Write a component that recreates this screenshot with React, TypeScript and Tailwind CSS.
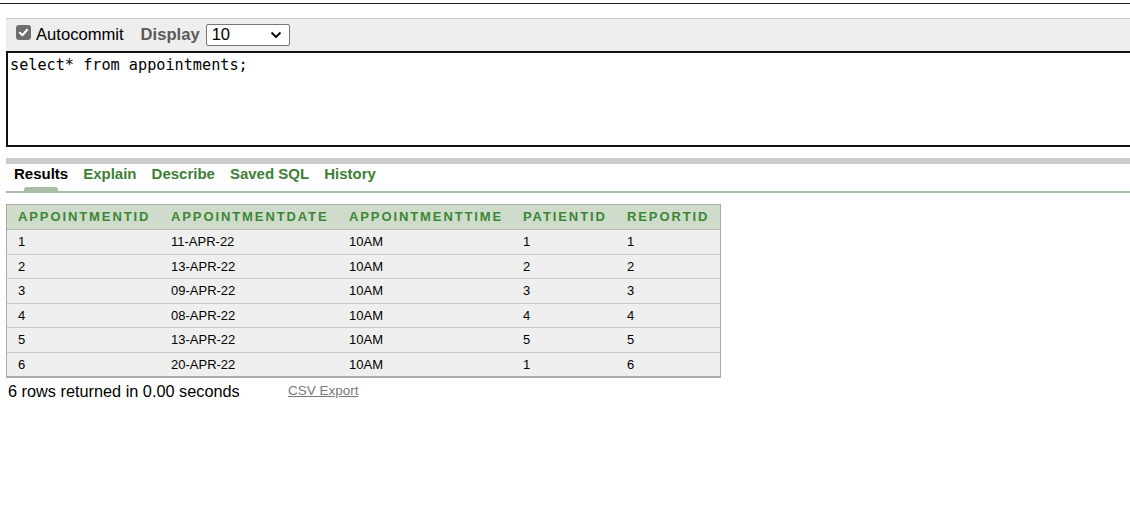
import React from 'react';

const columns = [
  { key: 'APPOINTMENTID', width: 'w-[153px]' },
  { key: 'APPOINTMENTDATE', width: 'w-[178px]' },
  { key: 'APPOINTMENTTIME', width: 'w-[174px]' },
  { key: 'PATIENTID', width: 'w-[104px]' },
  { key: 'REPORTID', width: 'flex-1' },
];

const rows = [
  ['1', '11-APR-22', '10AM', '1', '1'],
  ['2', '13-APR-22', '10AM', '2', '2'],
  ['3', '09-APR-22', '10AM', '3', '3'],
  ['4', '08-APR-22', '10AM', '4', '4'],
  ['5', '13-APR-22', '10AM', '5', '5'],
  ['6', '20-APR-22', '10AM', '1', '6'],
];

const tabs = ['Results', 'Explain', 'Describe', 'Saved SQL', 'History'];

export default function App() {
  return (
    <div className="w-[1130px] h-[511px] overflow-hidden bg-white font-['Liberation_Sans',Arial,sans-serif] text-black">
      <div className="h-[3px]" />
      <div className="h-px bg-[#222]" />

      {/* toolbar */}
      <div className="ml-[6px] mt-[14px] w-[1200px] h-[33px] bg-[#eeeeee] border-t border-[#cfcfcf] flex items-center">
        <div className="ml-[10px] -mt-[5px] w-[15px] h-[15px] rounded-[3px] bg-[#6e6e6e] flex items-center justify-center">
          <svg width="11" height="11" viewBox="0 0 12 12">
            <path d="M2 6.3 L4.8 9 L10 3" fill="none" stroke="white" strokeWidth="2.2" strokeLinecap="round" strokeLinejoin="round" />
          </svg>
        </div>
        <span className="ml-[5px] text-[16.6px] leading-none">Autocommit</span>
        <span className="ml-[17px] text-[16.6px] font-bold text-[#5b5b5b] leading-none">Display</span>
        <div className="ml-[6px] w-[84px] h-[22px] border border-[#767676] rounded-[2px] bg-white flex items-center justify-between px-[5px]">
          <span className="text-[16.6px] leading-none">10</span>
          <svg width="12" height="8" viewBox="0 0 12 8" className="mr-[2px]">
            <path d="M1.5 1.5 L6 6 L10.5 1.5" fill="none" stroke="#111" strokeWidth="2" />
          </svg>
        </div>
      </div>

      {/* editor */}
      <div className="ml-[6px] w-[1200px] h-[96px] border-2 border-[#111] bg-white px-[2px] pt-[3px] font-['DejaVu_Sans_Mono',monospace] text-[15.2px] leading-[18px]">
        select* from appointments;
      </div>

      <div className="ml-[6px] mt-[11px] h-[6px] bg-[#cccccc]" />

      {/* tabs */}
      <div className="ml-[6px] relative h-[29px]">
        <div className="flex items-center h-[19px] pl-[8px] pt-[1px] text-[15px] font-bold">
          {tabs.map((t, i) => (
            <span key={t} className={(i === 0 ? 'text-black' : 'text-[#3d7f36] ml-[15px]')}>
              {t}
            </span>
          ))}
        </div>
        <div className="absolute left-[18px] top-[23px] w-[34px] h-[4px] rounded-t-[3px] bg-[#a9bea7]" />
        <div className="absolute left-0 right-0 top-[27px] h-[2px] bg-[#a9bea7]" />
      </div>

      {/* table */}
      <div className="ml-[6px] mt-[11px] w-[715px] border border-[#aaaaaa]">
        <div className="flex h-[25px] bg-[#cfdccb] border-b border-[#bbbbbb] items-center">
          {columns.map((c) => (
            <div key={c.key} className={c.width + ' pl-[11px] text-[13px] font-bold tracking-[1.9px] text-[#3b8734]'}>
              {c.key}
            </div>
          ))}
        </div>
        {rows.map((r, ri) => (
          <div
            key={ri}
            className={'flex h-[24.5px] items-center bg-[#efefef] ' + (ri < rows.length - 1 ? 'border-b border-[#cdcdcd]' : 'border-b border-[#aaaaaa]')}
          >
            {r.map((v, ci) => (
              <div key={ci} className={columns[ci].width + ' pl-[11px] text-[13px]'}>
                {v}
              </div>
            ))}
          </div>
        ))}
      </div>

      <div className="flex items-center ml-[8px] mt-[3px] h-[20px]">
        <span className="text-[16.3px] w-[280px]">6 rows returned in 0.00 seconds</span>
        <span className="text-[13.5px] text-[#7a7a7a] underline">CSV Export</span>
      </div>
    </div>
  );
}
